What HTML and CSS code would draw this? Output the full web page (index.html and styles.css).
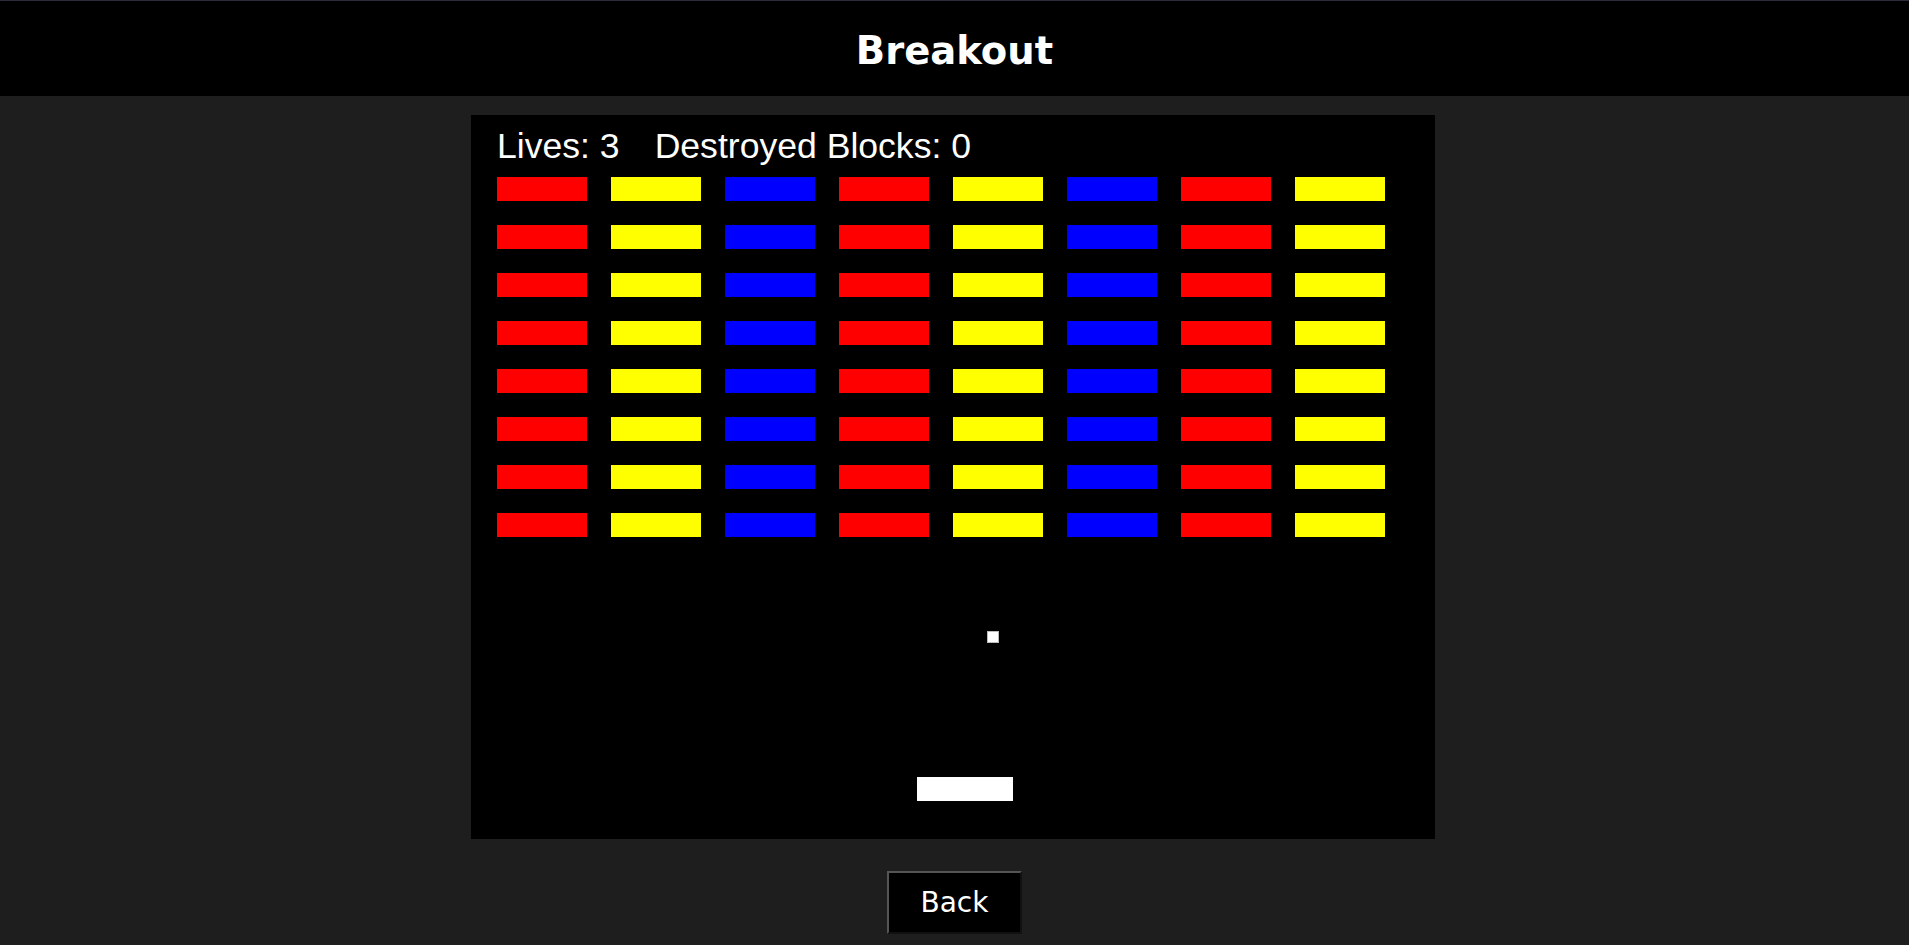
FILE: index.html
```html
<!DOCTYPE html>
<html>
<head>
<meta charset="utf-8">
<title>Breakout</title>
<link rel="stylesheet" href="styles.css">
</head>
<body>
<header class="top-bar">
  <h1 class="title">Breakout</h1>
</header>
<main class="main">
  <div class="board">
    <div class="stats">
      <span class="stat">Lives: 3</span>
      <span class="stat stat-gap">Destroyed Blocks: 0</span>
    </div>
    <div class="bricks">
      <div class="brick red"></div><div class="brick yellow"></div><div class="brick blue"></div><div class="brick red"></div><div class="brick yellow"></div><div class="brick blue"></div><div class="brick red"></div><div class="brick yellow"></div>
      <div class="brick red"></div><div class="brick yellow"></div><div class="brick blue"></div><div class="brick red"></div><div class="brick yellow"></div><div class="brick blue"></div><div class="brick red"></div><div class="brick yellow"></div>
      <div class="brick red"></div><div class="brick yellow"></div><div class="brick blue"></div><div class="brick red"></div><div class="brick yellow"></div><div class="brick blue"></div><div class="brick red"></div><div class="brick yellow"></div>
      <div class="brick red"></div><div class="brick yellow"></div><div class="brick blue"></div><div class="brick red"></div><div class="brick yellow"></div><div class="brick blue"></div><div class="brick red"></div><div class="brick yellow"></div>
      <div class="brick red"></div><div class="brick yellow"></div><div class="brick blue"></div><div class="brick red"></div><div class="brick yellow"></div><div class="brick blue"></div><div class="brick red"></div><div class="brick yellow"></div>
      <div class="brick red"></div><div class="brick yellow"></div><div class="brick blue"></div><div class="brick red"></div><div class="brick yellow"></div><div class="brick blue"></div><div class="brick red"></div><div class="brick yellow"></div>
      <div class="brick red"></div><div class="brick yellow"></div><div class="brick blue"></div><div class="brick red"></div><div class="brick yellow"></div><div class="brick blue"></div><div class="brick red"></div><div class="brick yellow"></div>
      <div class="brick red"></div><div class="brick yellow"></div><div class="brick blue"></div><div class="brick red"></div><div class="brick yellow"></div><div class="brick blue"></div><div class="brick red"></div><div class="brick yellow"></div>
    </div>
    <div class="ball"></div>
    <div class="paddle"></div>
  </div>
  <button class="back-btn" type="button">Back</button>
</main>
</body>
</html>
```

FILE: styles.css
```css
html, body {
  margin: 0;
  padding: 0;
}
body {
  background: #1e1e1e;
  font-family: "DejaVu Sans", Verdana, sans-serif;
  color: #fff;
  height: 945px;
  overflow: hidden;
}
.top-bar {
  box-sizing: border-box;
  height: 96px;
  border-top: 1px solid #2b2b3a;
  padding-top: 3px;
  background: #000;
  display: flex;
  align-items: center;
  justify-content: center;
}
.title {
  margin: 0;
  font-size: 38.5px;
  font-weight: bold;
  line-height: normal;
  color: #fff;
}
.main {
  display: flex;
  flex-direction: column;
  align-items: center;
  padding-top: 19px;
}
.board {
  position: relative;
  box-sizing: border-box;
  width: 964px;
  height: 724px;
  margin-right: 3px;
  background: #000;
  padding: 11px 26px 0;
}
.stats {
  display: flex;
  font-family: "Liberation Sans", Arial, sans-serif;
  font-size: 35.6px;
  line-height: 40px;
  color: #fff;
}
.stat-gap {
  margin-left: 35px;
}
.bricks {
  margin-top: 11px;
  display: grid;
  grid-template-columns: repeat(8, 90px);
  grid-auto-rows: 24px;
  column-gap: 24px;
  row-gap: 24px;
}
.red { background: #ff0000; }
.yellow { background: #ffff00; }
.blue { background: #0000ff; }
.ball {
  position: absolute;
  left: 516px;
  top: 516px;
  width: 12px;
  height: 12px;
  box-sizing: border-box;
  background: #fff;
  border: 1px solid #bbb;
}
.paddle {
  position: absolute;
  left: 446px;
  top: 662px;
  width: 96px;
  height: 24px;
  background: #fff;
}
.back-btn {
  margin-top: 32px;
  box-sizing: border-box;
  width: 135px;
  height: 63px;
  padding: 0;
  background: #000;
  color: #fff;
  font-family: "DejaVu Sans", Verdana, sans-serif;
  font-size: 28px;
  border-style: solid;
  border-width: 2px;
  border-color: #555 #111 #111 #555;
  cursor: pointer;
}
```
